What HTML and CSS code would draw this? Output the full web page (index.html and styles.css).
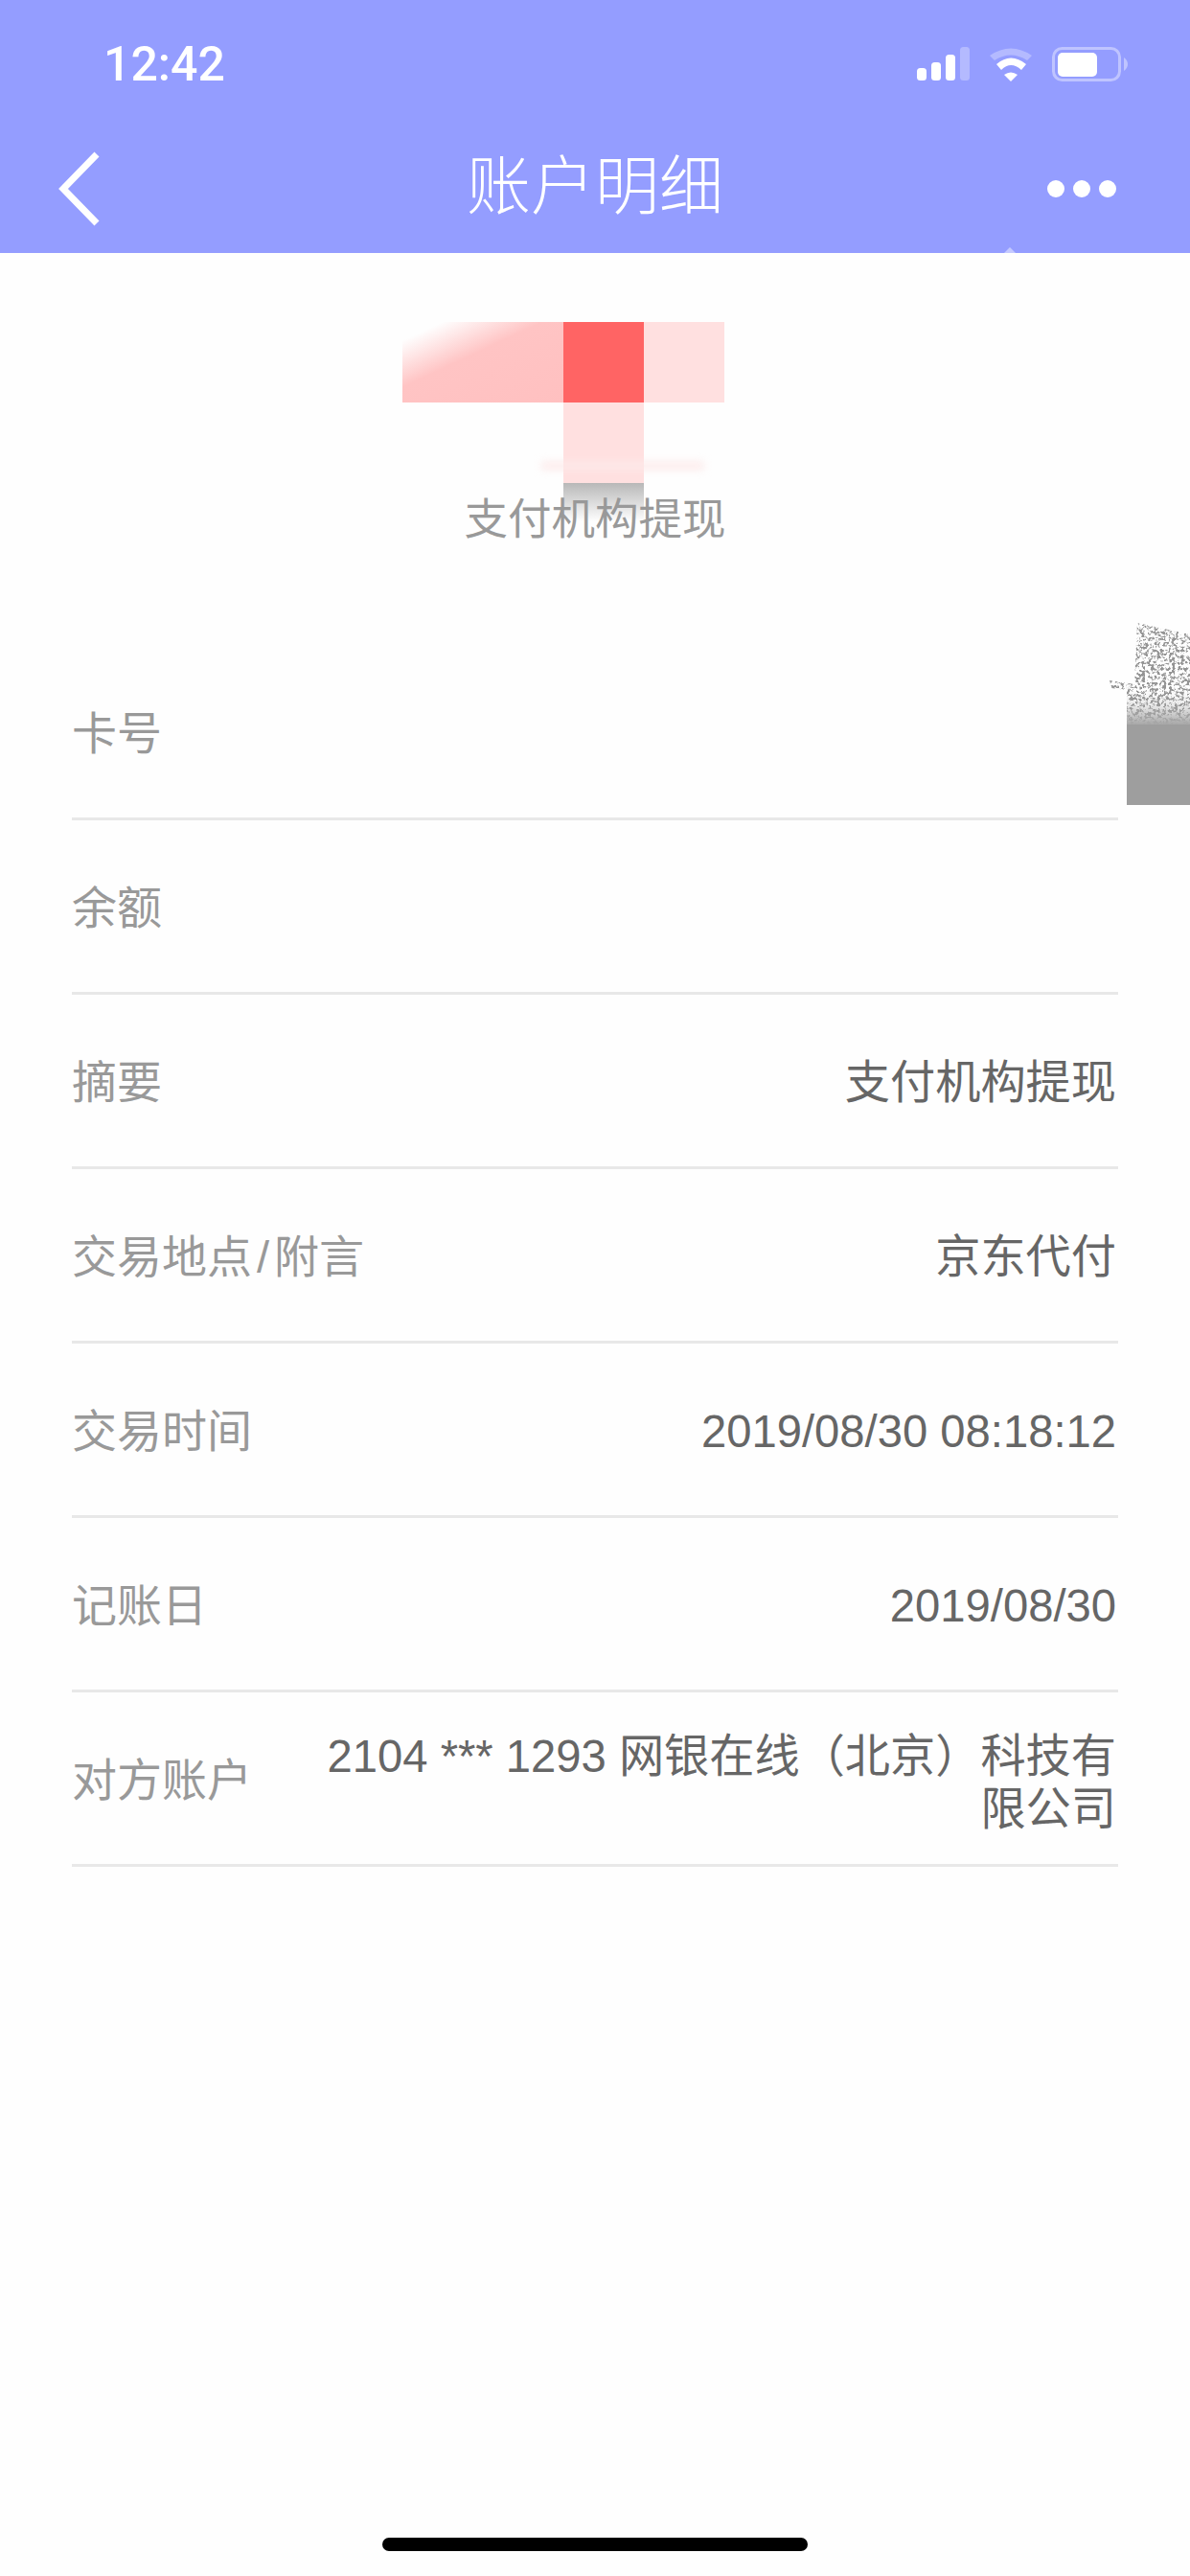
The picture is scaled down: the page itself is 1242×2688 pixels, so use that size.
FILE: index.html
```html
<!DOCTYPE html>
<html lang="zh-CN">
<head>
  <meta charset="UTF-8">
  <title>账户明细</title>
  <link rel="stylesheet" href="styles.css">
</head>
<body>
  <header class="header">
    <div class="status">
      <span class="time">12:42</span>
      <div class="status-icons">
        <svg class="signal" width="55" height="36" viewBox="0 0 55 36">
          <rect x="0" y="22" width="10" height="13" rx="3.5" fill="#fff"/>
          <rect x="15" y="16" width="10" height="19" rx="3.5" fill="#fff"/>
          <rect x="30" y="8" width="10" height="27" rx="3.5" fill="#fff"/>
          <rect x="45" y="0" width="10" height="35" rx="3.5" fill="#fff" opacity=".3"/>
        </svg>
        <svg class="wifi" width="46" height="36" viewBox="0 0 46 36">
          <path d="M1 9Q23 -6 45 9L40 14Q23 3 6 14Z" fill="#fff" opacity=".3"/>
          <path d="M8 18Q23 5 39 18L34 24Q23 14 13 24Z" fill="#fff"/>
          <path d="M16 29Q23 24 30 29L23 36Z" fill="#fff"/>
        </svg>
        <svg class="battery" width="80" height="36" viewBox="0 0 80 36">
          <rect x="1.5" y="1.5" width="69" height="33" rx="9" fill="none" stroke="#fff" stroke-width="3" opacity=".4"/>
          <rect x="6" y="6" width="41" height="25" rx="5" fill="#fff"/>
          <path d="M75 11Q79 14 79 18Q79 22 75 25Z" fill="#fff" opacity=".4"/>
        </svg>
      </div>
    </div>
    <nav class="nav">
      <svg class="back" width="46" height="80" viewBox="0 0 46 80">
        <polyline points="40,4 5,40 40,76" fill="none" stroke="#fff" stroke-width="7"/>
      </svg>
      <h1 class="title">账户明细</h1>
      <div class="more"><i></i><i></i><i></i></div>
    </nav>
  </header>
  <div class="speck"></div>

  <section class="hero">
    <div class="mosaic">
      <div class="cell wide"></div>
      <div class="cell strong"></div>
      <div class="cell pale"></div>
      <div class="cell spacer"></div>
      <div class="cell pale"></div>
      <div class="cell spacer"></div>
      <div class="cell spacer"></div>
      <div class="cell fade"></div>
    </div>
    <div class="smudge"></div>
    <p class="hero-text">支付机构提现</p>
  </section>

  <div class="rows">
    <div class="row"><span class="label">卡号</span></div>
    <div class="row"><span class="label">余额</span></div>
    <div class="row"><span class="label">摘要</span><span class="value">支付机构提现</span></div>
    <div class="row"><span class="label">交易地点<span class="slash">/</span>附言</span><span class="value">京东代付</span></div>
    <div class="row"><span class="label">交易时间</span><span class="value">2019/08/30 08:18:12</span></div>
    <div class="row"><span class="label">记账日</span><span class="value">2019/08/30</span></div>
    <div class="row"><span class="label">对方账户</span><span class="value wrap">2104 *** 1293 网银在线（北京）科技有限公司</span></div>
  </div>

  <!-- leftover of the redacted picture at the right edge -->
  <div class="patch">
    <svg width="84" height="106" viewBox="0 0 84 106">
      <defs>
        <filter id="speckle" x="0" y="0" width="100%" height="100%">
          <feTurbulence type="fractalNoise" baseFrequency="0.32" numOctaves="3" seed="11"/>
          <feColorMatrix values="0 0 0 0 .3  0 0 0 0 .3  0 0 0 0 .3  5 5 0 0 -4.8"/>
          <feComposite in2="SourceGraphic" operator="in"/>
        </filter>
        <linearGradient id="patch-fade" x1="0" y1="0" x2="0" y2="1">
          <stop offset="0" stop-color="#aaa" stop-opacity="0"/>
          <stop offset=".45" stop-color="#aaa" stop-opacity=".25"/>
          <stop offset="1" stop-color="#a8a8a8"/>
        </linearGradient>
      </defs>
      <path d="M29 0L84 12V106H18V70L2 68L0 60L26 64Z" fill="#000" filter="url(#speckle)"/>
      <rect x="18" y="70" width="66" height="36" fill="url(#patch-fade)"/>
    </svg>
    <div class="patch-block"></div>
  </div>

  <div class="home-bar"></div>
</body>
</html>
```

FILE: styles.css
```css
* {
  box-sizing: border-box;
}
body {
  margin: 0;
  width: 1242px;
  height: 2688px;
  position: relative;
  overflow: hidden;
  background-color: #fefefe;
  font-family: "Liberation Sans", "Noto Sans CJK SC", sans-serif;
}

/* header */
.header {
  height: 264px;
  background-color: #949dff;
  color: #fff;
}
.status {
  height: 134px;
  padding: 0 64px 0 108px;
  display: flex;
  justify-content: space-between;
  align-items: center;
}
.time {
  font-family: Roboto, sans-serif;
  font-size: 50px;
  font-weight: 500;
}
.status-icons {
  display: flex;
  align-items: center;
  gap: 20px;
}
.nav {
  height: 126px;
  padding: 0 77px;
  display: grid;
  grid-template-columns: 1fr auto 1fr;
  align-items: center;
}
.back {
  display: block;
  margin-left: -16px;
}
.title {
  margin: 0;
  font-size: 67px;
  font-weight: 300;
  line-height: 1;
  position: relative;
  top: -3px;
}
.more {
  display: flex;
  justify-content: flex-end;
  gap: 9px;
}
.more i {
  width: 18px;
  height: 18px;
  border-radius: 50%;
  background-color: #fff;
}
.speck {
  position: absolute;
  left: 1048px;
  top: 258px;
  border-left: 6px solid transparent;
  border-right: 6px solid transparent;
  border-bottom: 6px solid #c4c9ff;
}

/* top of the page */
.hero {
  height: 410px;
  position: relative;
}
.mosaic {
  position: absolute;
  left: 420px;
  top: 72px;
  display: grid;
  grid-template-columns: 168px 84px 84px;
  grid-auto-rows: 84px;
}
.wide {
  background: linear-gradient(155deg, #fefefe 12%, #ffc4c4 42%, #ffc0c0);
}
.strong {
  background-color: #ff6464;
}
.pale {
  background-color: #ffe0e0;
}
.fade {
  grid-column: 2;
  height: 40px;
  background: linear-gradient(#b8b8b8, #fefefe);
}
.smudge {
  position: absolute;
  left: 565px;
  top: 218px;
  width: 170px;
  height: 8px;
  background-color: #fdeaea;
  filter: blur(4px);
}
.hero-text {
  margin: 0;
  position: absolute;
  left: 0;
  right: 0;
  top: 246px;
  text-align: center;
  font-size: 45.5px;
  line-height: 66px;
  color: #999;
}

/* detail rows */
.rows {
  margin: 0 75px;
}
.row {
  height: 182px;
  padding-top: 3px;
  display: flex;
  justify-content: space-between;
  align-items: center;
  border-bottom: 3px solid #e8e8e8;
  font-size: 47px;
  line-height: 55px;
}
.label {
  color: #999;
  white-space: nowrap;
}
.slash {
  margin: 0 5px;
}
.value {
  color: #666;
  text-align: right;
  padding-right: 2px;
  font-size: 47.2px;
}
.wrap {
  width: 850px;
  margin-top: 5px;
}

.patch {
  position: absolute;
  right: 0;
  top: 650px;
  width: 84px;
}
.patch svg {
  display: block;
}
.patch-block {
  margin-left: 18px;
  height: 84px;
  background-color: #9e9e9e;
}

.home-bar {
  position: absolute;
  left: 399px;
  top: 2648px;
  width: 444px;
  height: 14px;
  border-radius: 7px;
  background-color: #000;
}
```
